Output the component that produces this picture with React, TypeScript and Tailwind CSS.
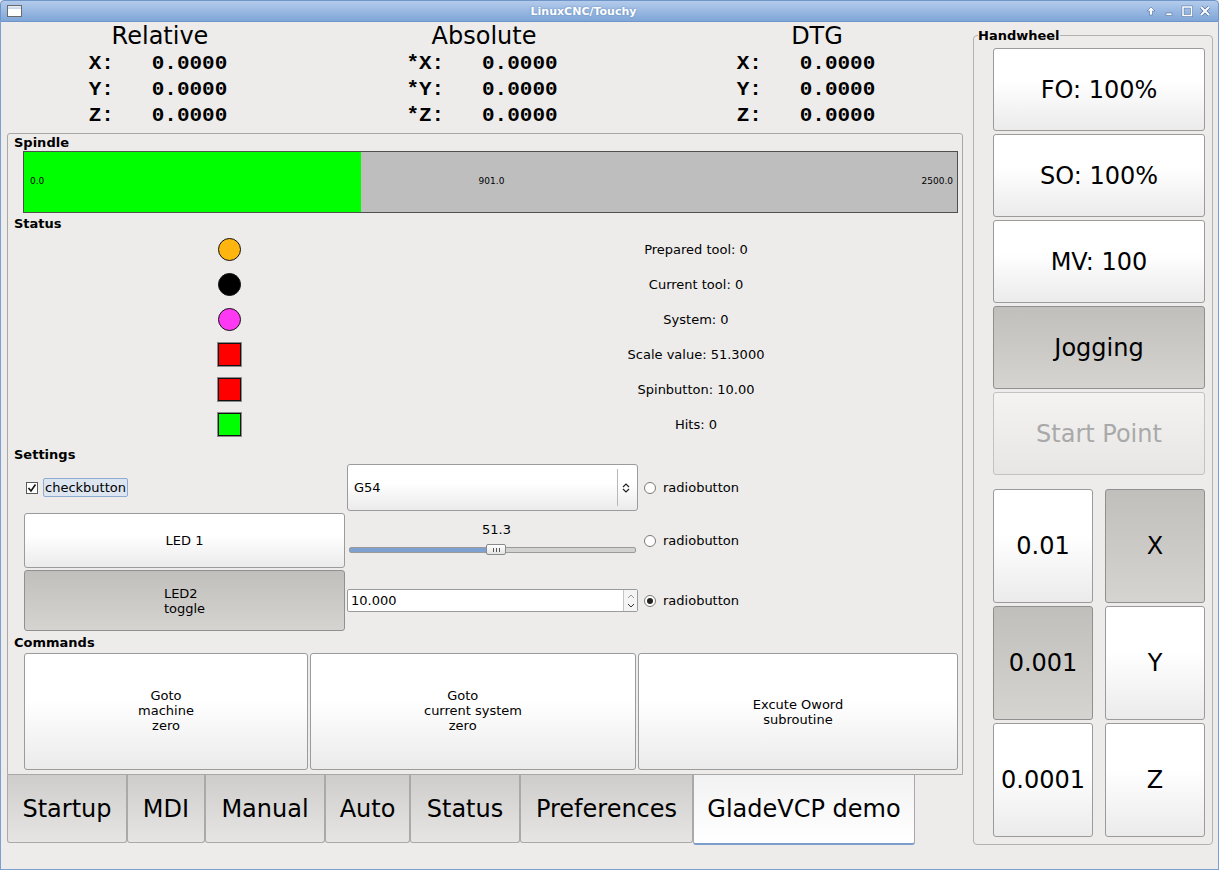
import React from 'react'

const btn =
  'flex items-center justify-center rounded-[3px] border border-[#9b9b9b] bg-linear-to-b from-white from-40% to-[#ebebeb]'
const pressed =
  'flex items-center justify-center rounded-[3px] border border-[#909090] bg-linear-to-b from-[#c1bfbc] to-[#d5d4d1]'

function Radio({ on }: { on?: boolean }) {
  return (
    <span className="w-[12px] h-[12px] shrink-0 rounded-full border border-[#7a7a7a] bg-white flex items-center justify-center">
      {on && <span className="w-[6px] h-[6px] rounded-full bg-[#222]" />}
    </span>
  )
}

function TitleBar() {
  return (
    <div className="h-[22px] shrink-0 flex items-center rounded-t-[4px] border border-[#6f95c9] bg-linear-to-b from-[#b3cbeb] to-[#7fa6d8]">
      {/* window menu icon */}
      <div className="ml-[6px] w-[15px] h-[12px] border border-[#6b6b6b] bg-white flex flex-col">
        <div className="h-[3px] bg-linear-to-b from-[#e8eef8] to-[#c5d3e8]" />
      </div>
      <div className="flex-1 text-center text-[11px] font-bold text-white leading-none [text-shadow:0_0_2px_#5a7fb0]">
        LinuxCNC/Touchy
      </div>
      <div className="flex items-center gap-[6px] mr-[7px]">
        <svg width="12" height="12" viewBox="0 0 12 12">
          <path d="M6 2 L10 6 H7.5 V10 H4.5 V6 H2 Z" fill="white" stroke="#4d6f9c" strokeWidth="0.6" />
        </svg>
        <svg width="12" height="12" viewBox="0 0 12 12">
          <rect x="3" y="8" width="6" height="2.5" fill="white" stroke="#4d6f9c" strokeWidth="0.6" />
        </svg>
        <svg width="12" height="12" viewBox="0 0 12 12">
          <rect x="2" y="2" width="8.5" height="8.5" fill="none" stroke="#4d6f9c" strokeWidth="2.6" />
          <rect x="2" y="2" width="8.5" height="8.5" fill="none" stroke="white" strokeWidth="1.6" />
        </svg>
        <svg width="12" height="12" viewBox="0 0 12 12">
          <path d="M2 2 L10 10 M10 2 L2 10" stroke="#4d6f9c" strokeWidth="3.2" />
          <path d="M2 2 L10 10 M10 2 L2 10" stroke="white" strokeWidth="2" />
        </svg>
      </div>
    </div>
  )
}

function Dro({ title, rows, width, shift }: { title: string; rows: string[]; width: string; shift?: boolean }) {
  return (
    <div className={`${width} shrink-0 flex flex-col`}>
      <div className="h-[28px] leading-[28px] text-center text-[24px]">{title}</div>
      <div className={`mx-auto w-fit ${shift ? 'pr-[22px]' : 'pr-[4px]'}`}>
        {rows.map((r) => (
          <div key={r} className="h-[26px] leading-[27px] whitespace-pre font-['Liberation_Mono',monospace] font-bold text-[21px]">
            {r}
          </div>
        ))}
      </div>
    </div>
  )
}

const label = 'h-[16px] leading-[16px] pl-[6px] text-[13px] font-bold'

function StatusIcon({ kind, color }: { kind: 'circle' | 'square'; color: string }) {
  if (kind === 'circle')
    return <div className="w-[23px] h-[23px] rounded-full border-[1.5px] border-[#111]" style={{ background: color }} />
  return (
    <div className="w-[23px] h-[23px] border-[1.5px] border-[#111] outline outline-[#8a8a8a]" style={{ background: color }} />
  )
}

const statusRows: { kind: 'circle' | 'square'; color: string; text: string }[] = [
  { kind: 'circle', color: '#ffb50f', text: 'Prepared tool: 0' },
  { kind: 'circle', color: '#000000', text: 'Current tool: 0' },
  { kind: 'circle', color: '#ff38f3', text: 'System: 0' },
  { kind: 'square', color: '#ff0000', text: 'Scale value: 51.3000' },
  { kind: 'square', color: '#ff0000', text: 'Spinbutton: 10.00' },
  { kind: 'square', color: '#00ff00', text: 'Hits: 0' },
]

function Frame() {
  return (
    <div className="w-[956px] h-[642px] shrink-0 border border-[#a8a8a8] rounded-t-[3px] flex flex-col text-[13px]">
      <div className="h-[17px] leading-[18px] pl-[6px] text-[13px] font-bold">Spindle</div>
      <div className="ml-[15px] w-[935px] h-[62px] border border-[#4f4f4f] bg-[linear-gradient(to_right,#00ff00_337px,#bebebe_337px)] grid grid-cols-3 items-center text-[9px] pl-[6px] pr-[4px]">
        <span className="text-left">0.0</span>
        <span className="text-center">901.0</span>
        <span className="text-right">2500.0</span>
      </div>

      <div className={`mt-[3px] ${label}`}>Status</div>
      {statusRows.map((s, i) => (
        <div key={i} className="h-[35px] flex items-center">
          <div className="w-[442px] flex justify-center">
            <StatusIcon kind={s.kind} color={s.color} />
          </div>
          <div className="w-[492px] text-center text-[13px]">{s.text}</div>
        </div>
      ))}

      <div className={`mt-[5px] ${label}`}>Settings</div>
      <div className="mt-[1px] ml-[16px] grid grid-cols-[321px_291px_1fr] grid-rows-[47px_55px_61px] gap-y-[2px] gap-x-[2px]">
        {/* row 1 */}
        <div className="flex items-center">
          <span className="ml-[2px] w-[12px] h-[12px] border border-[#5a5a5a] bg-white flex items-center justify-center">
            <svg width="10" height="10" viewBox="0 0 10 10">
              <path d="M1.5 5 L4 8 L8.5 1.5" fill="none" stroke="#111" strokeWidth="1.6" />
            </svg>
          </span>
          <span className="ml-[5px] h-[19px] px-[1px] leading-[17px] border border-[#8eabd2] rounded-[2px] bg-[#dde5f0]">
            checkbutton
          </span>
        </div>
        <div className={`${btn} !justify-start relative`}>
          <span className="ml-[6px]">G54</span>
          <span className="absolute right-[19px] top-[4px] bottom-[4px] w-px bg-[#b8b8b8]" />
          <svg className="absolute right-[7px]" width="8" height="12" viewBox="0 0 8 12">
            <path d="M1 5 L4 2 L7 5 M1 7 L4 10 L7 7" fill="none" stroke="#222" strokeWidth="1.2" />
          </svg>
        </div>
        <div className="flex items-center gap-[7px] pl-[4px]">
          <Radio />
          <span>radiobutton</span>
        </div>

        {/* row 2 */}
        <div className={btn}>LED 1</div>
        <div className="flex flex-col pt-[10px]">
          <div className="h-[14px] leading-[14px] text-center pl-[8px]">51.3</div>
          <div className="mt-[7px] relative h-[11px] ml-[2px] w-[287px] flex items-center">
            <div className="w-full h-[6px] rounded-[2px] border border-[#9a9a9a] bg-[linear-gradient(to_right,#7ea1d1_138px,#d2d2d0_138px)]" />
            <div className="absolute left-[137px] top-0 w-[20px] h-[11px] rounded-[2px] border border-[#8a8a8a] bg-linear-to-b from-white to-[#e4e4e4] flex items-center justify-center gap-[2px]">
              <span className="w-px h-[4px] bg-[#555]" />
              <span className="w-px h-[4px] bg-[#555]" />
              <span className="w-px h-[4px] bg-[#555]" />
            </div>
          </div>
        </div>
        <div className="flex items-center gap-[7px] pl-[4px]">
          <Radio />
          <span>radiobutton</span>
        </div>

        {/* row 3 */}
        <div className={pressed}>
          <span className="whitespace-pre text-left leading-[15px]">{'LED2\ntoggle'}</span>
        </div>
        <div className="flex items-center">
          <div className="w-full h-[23px] flex border border-[#9b9b9b] rounded-[2px] bg-white">
            <span className="flex-1 pl-[3px] leading-[21px]">10.000</span>
            <span className="w-[14px] border-l border-[#c4c4c4] flex flex-col items-center justify-center bg-[#f4f4f4]">
              <svg width="8" height="18" viewBox="0 0 8 18">
                <path d="M1 6 L4 3 L7 6" fill="none" stroke="#9a9a9a" strokeWidth="1" />
                <path d="M1 12 L4 15 L7 12" fill="none" stroke="#333" strokeWidth="1" />
              </svg>
            </span>
          </div>
        </div>
        <div className="flex items-center gap-[7px] pl-[4px]">
          <Radio on />
          <span>radiobutton</span>
        </div>
      </div>

      <div className={`mt-[4px] ${label}`}>Commands</div>
      <div className="mt-[2px] ml-[16px] flex gap-[2px] h-[117px]">
        <div className={`${btn} w-[284px]`}>
          <span className="whitespace-pre text-center leading-[15px] pb-[2px]">{'Goto\nmachine\nzero'}</span>
        </div>
        <div className={`${btn} w-[326px]`}>
          <span className="whitespace-pre text-center leading-[15px] pb-[2px]">{'Goto     \ncurrent system\nzero     '}</span>
        </div>
        <div className={`${btn} w-[320px]`}>
          <span className="whitespace-pre text-center leading-[15px]">{'Excute Oword\nsubroutine'}</span>
        </div>
      </div>
    </div>
  )
}

const tabs = [
  { name: 'Startup', w: 'w-[120px]' },
  { name: 'MDI', w: 'w-[78px]' },
  { name: 'Manual', w: 'w-[120px]' },
  { name: 'Auto', w: 'w-[85px]' },
  { name: 'Status', w: 'w-[110px]' },
  { name: 'Preferences', w: 'w-[173px]' },
]

function Tabs() {
  return (
    <div className="flex items-start text-[24px]">
      {tabs.map((t) => (
        <div
          key={t.name}
          className={`${t.w} h-[68px] shrink-0 flex items-center justify-center border-x border-b border-[#a9a9a9] rounded-b-[3px] bg-linear-to-b from-[#cecdcb] to-[#e6e5e3]`}
        >
          {t.name}
        </div>
      ))}
      <div className="w-[222px] h-[70px] shrink-0 flex items-center justify-center border-x border-[#a9a9a9] border-b-2 border-b-[#7c9ccb] rounded-b-[3px] bg-linear-to-b from-[#f2f2f2] to-white">
        GladeVCP demo
      </div>
    </div>
  )
}

function Handwheel() {
  return (
    <fieldset className="ml-[10px] mt-[6px] w-[240px] h-fit shrink-0 border border-[#b2b2b2] rounded-[4px] p-0 m-0">
      <legend className="ml-[4px] px-0 text-[13px] leading-[15px] font-bold">Handwheel</legend>
      <div className="pl-[19px] pr-[7px] pt-[5px] pb-[7px] flex flex-col text-[24px]">
        <div className="flex flex-col gap-[3px]">
          <div className={`${btn} h-[83px]`}>FO: 100%</div>
          <div className={`${btn} h-[83px]`}>SO: 100%</div>
          <div className={`${btn} h-[83px]`}>MV: 100</div>
          <div className={`${pressed} h-[83px]`}>Jogging</div>
          <div className="h-[83px] flex items-center justify-center rounded-[3px] border border-[#c2c2c2] bg-linear-to-b from-[#f4f3f2] to-[#e7e6e4] text-[#a9a9a9]">
            Start Point
          </div>
        </div>
        <div className="mt-[14px] grid grid-cols-2 gap-x-[12px] gap-y-[3px]">
          <div className={`${btn} h-[114px]`}>0.01</div>
          <div className={`${pressed} h-[114px]`}>X</div>
          <div className={`${pressed} h-[114px]`}>0.001</div>
          <div className={`${btn} h-[114px]`}>Y</div>
          <div className={`${btn} h-[114px]`}>0.0001</div>
          <div className={`${btn} h-[114px]`}>Z</div>
        </div>
      </div>
    </fieldset>
  )
}

export default function App() {
  return (
    <div className="w-[1219px] h-[870px] flex flex-col bg-[#edeceb] text-black font-['DejaVu_Sans',sans-serif] overflow-hidden">
      <TitleBar />
      <div className="flex-1 min-h-0 flex border-x border-b border-[#7b9fd1]">
        <div className="w-[962px] shrink-0 pl-[6px] flex flex-col">
          {/* DRO */}
          <div className="h-[111px] shrink-0 flex">
            <Dro title="Relative" width="w-[306px]" rows={['X:   0.0000', 'Y:   0.0000', 'Z:   0.0000']} />
            <Dro title="Absolute" width="w-[342px]" rows={['*X:   0.0000', '*Y:   0.0000', '*Z:   0.0000']} />
            <Dro title="DTG" width="w-[324px]" shift rows={['X:   0.0000', 'Y:   0.0000', 'Z:   0.0000']} />
          </div>
          <Frame />
          <Tabs />
        </div>
        <Handwheel />
      </div>
    </div>
  )
}
